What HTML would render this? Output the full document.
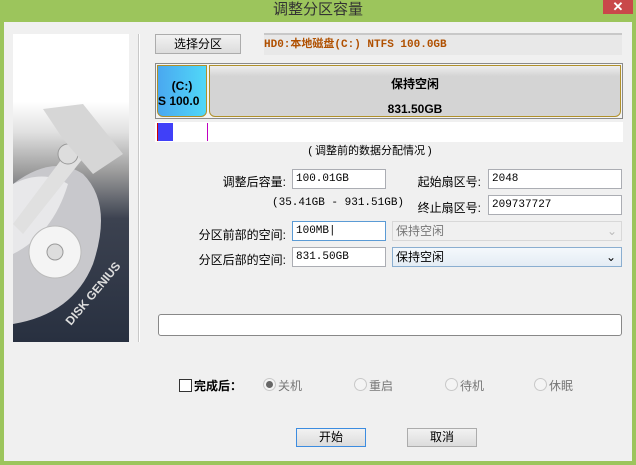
<!DOCTYPE html>
<html><head><meta charset="utf-8"><style>
*{margin:0;padding:0;box-sizing:border-box}
body{width:636px;height:465px;background:#9cc55c;position:relative;overflow:hidden;font-family:"Liberation Sans","Noto Sans CJK SC",sans-serif;font-size:12px;color:#000}
.a{position:absolute}
.title{left:0;top:0;width:636px;height:22px;text-align:center;line-height:20px;font-size:15px;color:#333}
.close{left:603px;top:0;width:30px;height:14px;background:#c9484a;color:#fff;text-align:center;line-height:13px;font-size:13px;font-weight:bold}
.main{left:4px;top:22px;width:628px;height:439px;background:#f0f0f0}
.inp{background:#fff;border:1px solid #abadb3;height:20px;line-height:18px;padding-left:3px;font-family:"Liberation Mono","Noto Sans CJK SC",monospace;font-size:11px}
.lbl{text-align:right;width:140px;font-size:12px}
.btn{background:linear-gradient(#f2f2f2,#dcdcdc);border:1px solid #acacac;text-align:center;line-height:17px;font-size:12px}
.radio{width:13px;height:13px;border-radius:50%;border:1px solid #c8c8c8;background:#f4f4f4}
.gr{color:#777}
</style></head><body>
<div class="a title">调整分区容量</div>
<div class="a close">✕</div>
<div class="a main"></div>
<!-- left image -->
<div class="a" style="left:13px;top:34px;width:116px;height:308px;background:linear-gradient(#fff 0,#fff 22%,#e0e0e0 32%,#9a9a9a 45%,#3c4250 60%,#283040 100%);overflow:hidden">
<svg width="116" height="308" viewBox="0 0 116 308">
<path d="M0 150 Q40 120 70 140 Q100 170 80 230 Q60 280 0 290Z" fill="#c8c8cc"/>
<path d="M0 150 Q30 135 55 150 Q40 200 0 220Z" fill="#e8e8ea"/>
<circle cx="42" cy="218" r="26" fill="#f4f4f4" stroke="#bbb"/>
<circle cx="42" cy="218" r="8" fill="#ddd" stroke="#999"/>
<path d="M0 190 L60 110 L75 118 L10 200Z" fill="#e0e0e0"/>
<circle cx="55" cy="120" r="10" fill="#ddd" stroke="#999"/>
<path d="M30 75 L70 70 L110 120 L80 140 L50 105Z" fill="#d6d6d6"/>
<text x="58" y="292" transform="rotate(-50 58 292)" font-size="12" font-weight="bold" fill="#ddd" font-family="Liberation Sans">DISK GENIUS</text>
</svg></div>
<div class="a" style="left:138px;top:34px;width:2px;height:308px;border-left:1px solid #c8c8c8;border-right:1px solid #fff"></div>
<!-- top -->
<div class="a btn" style="left:155px;top:34px;width:86px;height:20px;line-height:18px">选择分区</div>
<div class="a" style="left:264px;top:33px;width:358px;height:22px;background:#e8e8e8;border-top:2px solid #c8c8c8;color:#b05000;font-weight:bold;font-size:11px;line-height:20px;font-family:'Liberation Mono','Noto Sans CJK SC',monospace">HD0:本地磁盘(C:) NTFS 100.0GB</div>
<div class="a" style="left:155px;top:63px;width:468px;height:56px;border:1px solid #8a8a8a;background:#f4f4f4"></div>
<div class="a" style="left:157px;top:65px;width:50px;height:52px;border:1px solid #b0902a;border-radius:0 0 6px 6px;background:linear-gradient(90deg,#4aa8f0,#50d8f8);text-align:center;font-weight:bold;font-size:12px;line-height:15px;padding-top:13px;overflow:hidden;white-space:nowrap"><div>(C:)</div><div style="text-align:left">S 100.0</div></div>
<div class="a" style="left:209px;top:65px;width:412px;height:52px;border:1px solid #b0902a;border-radius:0 0 6px 6px;background:linear-gradient(#eee,#d4d4d4 20%,#d4d4d4);text-align:center;font-weight:bold;font-size:12px"><div style="margin-top:9px">保持空闲</div><div style="margin-top:10px">831.50GB</div></div>
<div class="a" style="left:155px;top:122px;width:468px;height:20px;background:#fff"></div>
<div class="a" style="left:157px;top:123px;width:16px;height:18px;background:#4040f8;border-left:1px solid #c00"></div>
<div class="a" style="left:207px;top:123px;width:1px;height:18px;background:#c000c0"></div>
<div class="a" style="left:300px;top:142px;width:140px;text-align:center;font-size:11px">( 调整前的数据分配情况 )</div>
<!-- form -->
<div class="a lbl" style="left:146px;top:173px">调整后容量:</div>
<div class="a inp" style="left:292px;top:169px;width:94px">100.01GB</div>
<div class="a lbl" style="left:341px;top:173px">起始扇区号:</div>
<div class="a inp" style="left:488px;top:169px;width:134px">2048</div>
<div class="a" style="left:272px;top:197px;font-size:11px;font-family:'Liberation Mono',monospace">(35.41GB - 931.51GB)</div>
<div class="a lbl" style="left:341px;top:199px">终止扇区号:</div>
<div class="a inp" style="left:488px;top:195px;width:134px">209737727</div>
<div class="a lbl" style="left:146px;top:226px">分区前部的空间:</div>
<div class="a inp" style="left:292px;top:221px;width:94px;border-color:#5b9bd5">100MB|</div>
<div class="a gr" style="left:392px;top:221px;width:230px;height:20px;background:#f0f0f0;border:1px solid #d8d8d8;line-height:18px;padding-left:3px">保持空闲<span style="float:right;margin-right:4px;color:#bbb">⌄</span></div>
<div class="a lbl" style="left:146px;top:251px">分区后部的空间:</div>
<div class="a inp" style="left:292px;top:247px;width:94px">831.50GB</div>
<div class="a" style="left:392px;top:247px;width:230px;height:20px;background:linear-gradient(#f4f8fc,#e4ecf4);border:1px solid #8aaed0;line-height:18px;padding-left:3px">保持空闲<span style="float:right;margin-right:5px">⌄</span></div>
<div class="a" style="left:158px;top:314px;width:464px;height:22px;border:1px solid #888;border-radius:3px;background:#fff"></div>
<!-- bottom -->
<div class="a" style="left:179px;top:379px;width:13px;height:13px;border:1px solid #333;background:#fff"></div>
<div class="a" style="left:194px;top:377px;font-weight:bold">完成后：</div>
<div class="a radio" style="left:263px;top:378px"><div style="width:7px;height:7px;border-radius:50%;background:#666;margin:2px"></div></div>
<div class="a gr" style="left:278px;top:377px">关机</div>
<div class="a radio" style="left:354px;top:378px"></div><div class="a gr" style="left:369px;top:377px">重启</div>
<div class="a radio" style="left:445px;top:378px"></div><div class="a gr" style="left:460px;top:377px">待机</div>
<div class="a radio" style="left:534px;top:378px"></div><div class="a gr" style="left:549px;top:377px">休眠</div>
<div class="a btn" style="left:296px;top:428px;width:70px;height:19px;border-color:#3c8ce0">开始</div>
<div class="a btn" style="left:407px;top:428px;width:70px;height:19px">取消</div>
</body></html>
